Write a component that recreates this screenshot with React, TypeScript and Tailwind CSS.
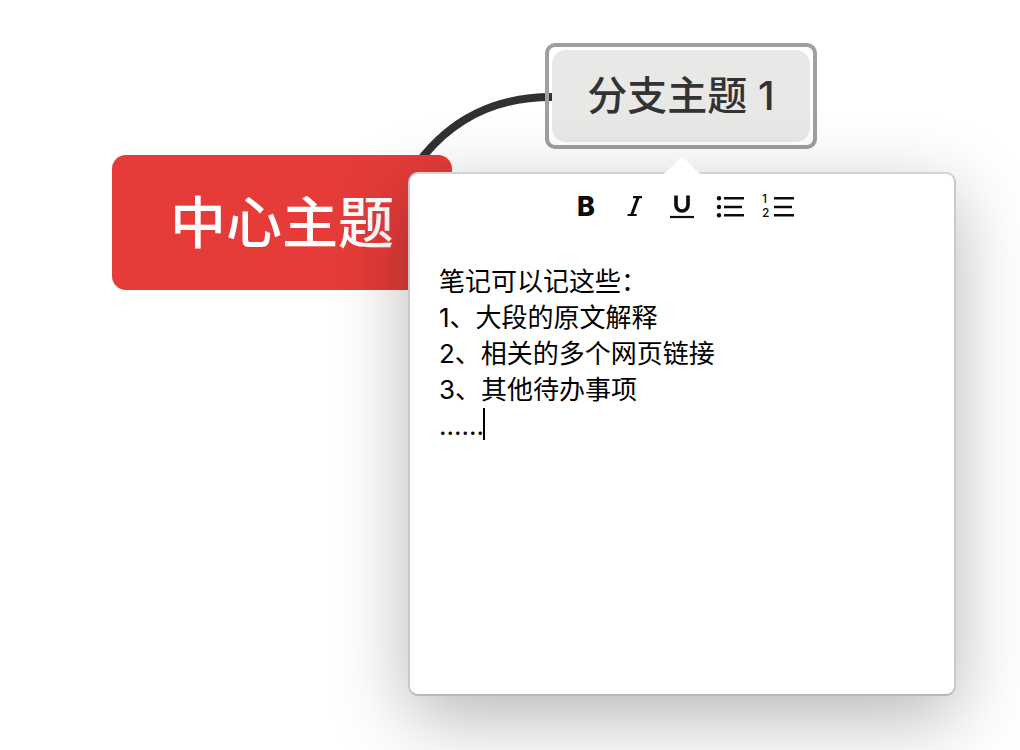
import React, { useState } from 'react';

const INITIAL_NOTE = `笔记可以记这些：
1、大段的原文解释
2、相关的多个网页链接
3、其他待办事项
......`;

interface ToolButtonProps {
  label: string;
  children: React.ReactNode;
}

const ToolButton: React.FC<ToolButtonProps> = ({ label, children }) => (
  <button
    type="button"
    aria-label={label}
    className="flex h-8 w-12 items-center justify-center text-[#0c0c0c]"
  >
    {children}
  </button>
);

const ItalicIcon = () => (
  <svg viewBox="0 0 32 32" className="h-8 w-8" fill="none" stroke="currentColor" aria-hidden="true">
    <path d="M15 6.2h9M9.6 24h9" strokeWidth="2.2" />
    <path d="M20.2 6.2 13.6 24" strokeWidth="3" />
  </svg>
);

const UnderlineIcon = () => (
  <svg viewBox="0 0 32 32" className="h-8 w-8" fill="none" stroke="currentColor" aria-hidden="true">
    <path d="M10 4.6V14a6 6 0 0 0 12 0V4.6" strokeWidth="3.6" />
    <path d="M4 26h24" strokeWidth="2.2" />
  </svg>
);

const BulletListIcon = () => (
  <svg viewBox="0 0 32 32" className="h-8 w-8" fill="currentColor" aria-hidden="true">
    <circle cx="5" cy="7.2" r="2.2" />
    <circle cx="5" cy="16" r="2.2" />
    <circle cx="5" cy="24.2" r="2.2" />
    <path d="M10 6h20v2.5H10zM10 14.8h18v2.5H10zM10 23h20v2.5H10z" />
  </svg>
);

const NumberListIcon = () => (
  <svg viewBox="0 0 32 32" className="h-8 w-8" fill="currentColor" aria-hidden="true">
    <text x="0" y="12" className="font-['Inter',sans-serif] text-[12px] font-medium">
      1
    </text>
    <text x="0" y="26" className="font-['Inter',sans-serif] text-[12px] font-medium">
      2
    </text>
    <path d="M12 6h20v2.5H12zM12 14.8h18v2.5H12zM12 23h20v2.5H12z" />
  </svg>
);

const NotePopover = () => {
  const [note, setNote] = useState(INITIAL_NOTE);

  return (
    <section
      aria-label="笔记"
      className="absolute left-[408px] top-[172px] w-[548px] rounded-[10px] border-2 border-x-[#c9c9c9] border-t-[#d4d4d4] border-b-[#b8b8b8] bg-white px-[29px] pt-[17px] pb-6 shadow-[0_22px_76px_rgba(0,0,0,0.29)]"
    >
      <svg
        viewBox="0 0 36 18"
        className="absolute bottom-full left-1/2 h-[18px] w-9 -translate-x-1/2"
        aria-hidden="true"
      >
        <path d="M0 18 16.6 1.6q1.4-1.2 2.8 0L36 18z" fill="#fff" />
      </svg>
      <div className="flex justify-center">
        <ToolButton label="粗体">
          <span className="font-['Inter',sans-serif] text-[27px] leading-8 font-extrabold">B</span>
        </ToolButton>
        <ToolButton label="斜体">
          <ItalicIcon />
        </ToolButton>
        <ToolButton label="下划线">
          <UnderlineIcon />
        </ToolButton>
        <ToolButton label="项目符号列表">
          <BulletListIcon />
        </ToolButton>
        <ToolButton label="编号列表">
          <NumberListIcon />
        </ToolButton>
      </div>
      <div className="relative mt-[41px]">
        <textarea
          aria-label="笔记内容"
          value={note}
          onChange={(e) => setNote(e.target.value)}
          className="block h-[406px] w-full resize-none bg-transparent text-[26px] leading-9 text-black caret-transparent outline-none"
        />
        <span className="absolute left-11 top-36 h-8 w-0.5 bg-black" />
      </div>
    </section>
  );
};

export default function App() {
  return (
    <main className="relative h-screen overflow-hidden bg-white font-['Inter','Noto_Sans_CJK_SC',sans-serif]">
      <svg
        viewBox="0 0 272 128"
        className="absolute left-[280px] top-[93px] h-32 w-[272px]"
        fill="none"
        stroke="#313131"
        strokeWidth="8"
        aria-hidden="true"
      >
        <path d="M116 106C152 34 205 4 272 4" />
      </svg>
      <div className="absolute left-28 top-[155px] flex h-[135px] w-[340px] items-center justify-center rounded-[14px] bg-[#e53c39] text-[56px] font-medium text-white">
        中心主题
      </div>
      <div className="absolute left-[545px] top-[43px] rounded-[10px] border-4 border-[#9f9f9f] p-[3px]">
        <div className="flex h-[92px] w-[258px] items-center justify-center rounded-[14px] bg-[#e8e8e7] text-[40px] font-medium text-[#333]">
          分支主题 1
        </div>
      </div>
      <NotePopover />
    </main>
  );
}
